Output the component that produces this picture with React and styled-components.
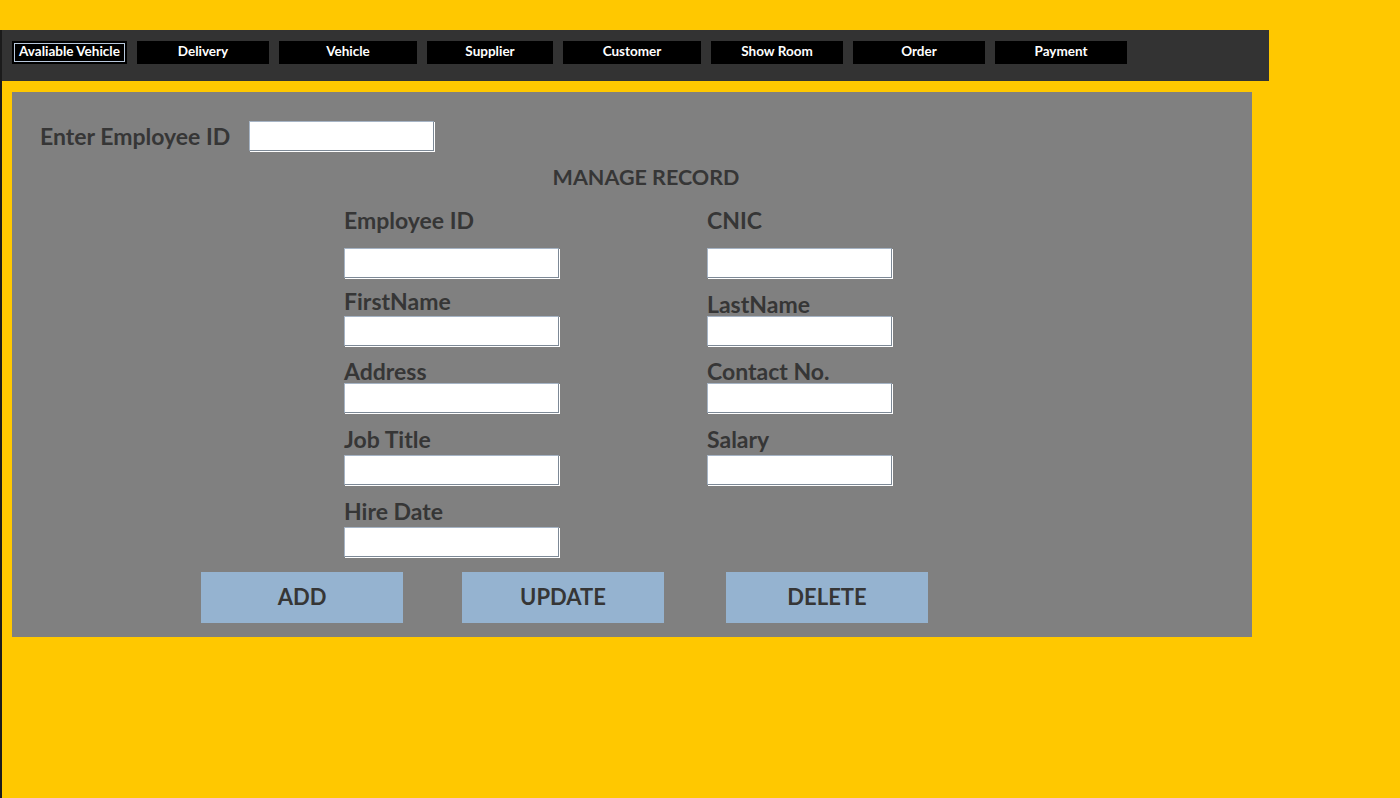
import React from 'react';
import styled, { createGlobalStyle } from 'styled-components';

const GlobalStyle = createGlobalStyle`
  html, body {
    margin: 0;
    padding: 0;
    height: 100%;
    background: #ffc800;
    font-family: Lato, "Open Sans", "Liberation Sans", sans-serif;
  }
  #root {
    min-height: 100%;
  }
`;

const Page = styled.div`
  min-height: 100vh;
  padding-top: 30px;
  box-sizing: border-box;
  background: #ffc800;
`;

const Frame = styled.div`
  min-height: calc(100vh - 30px);
  border-left: 2px solid #1b1b1b;
  box-sizing: border-box;
`;

const NavBar = styled.nav`
  display: flex;
  align-items: flex-start;
  gap: 10px;
  width: 1267px;
  height: 51px;
  box-sizing: border-box;
  padding: 11px 0 0 10px;
  background: #333333;
`;

const NavButton = styled.button`
  width: ${p => p.$w}px;
  height: 23px;
  padding: 0 0 3px;
  background: #000;
  color: #fff;
  font-family: Lato, "Open Sans", sans-serif;
  font-weight: 700;
  font-size: 13.5px;
  border: ${p => (p.$active ? '2px solid #000' : 'none')};
  outline: ${p => (p.$active ? '1px solid #b8c8dc' : 'none')};
  outline-offset: -3px;
  box-sizing: border-box;
  white-space: nowrap;
  cursor: pointer;
`;

const Panel = styled.section`
  width: 1240px;
  height: 545px;
  margin: 11px 0 0 10px;
  padding: 29px 0 0 28px;
  box-sizing: border-box;
  background: #808080;
`;

const SearchRow = styled.div`
  display: flex;
  align-items: flex-start;
  gap: 19px;

  ${'' /* label sits a bit above the box centre */}
  & > label {
    margin-top: 3px;
  }
`;

const Label = styled.label`
  display: block;
  font-size: 23px;
  line-height: 24px;
  font-weight: 700;
  color: #363636;
  white-space: nowrap;
`;

const TextBox = styled.input`
  display: block;
  width: ${p => p.$w - 1}px;
  height: 30px;
  margin: 0 0 1px;
  padding: 0 4px;
  box-sizing: border-box;
  background: #fff;
  border: 1px solid;
  border-color: #a6b4c5 #7d8996 #7d8996 #a6b4c5;
  box-shadow: 1px 1px 0 #fff;
  font-size: 15px;
`;

const Title = styled.h2`
  margin: 13px 0 0;
  font-size: 21.5px;
  line-height: 24px;
  font-weight: 700;
  text-align: center;
  color: #363636;
`;

const FormGrid = styled.div`
  display: grid;
  grid-template-columns: 363px 186px;
  margin-left: 304px;
`;

const Field = styled.div`
  display: flex;
  flex-direction: column;
  padding-top: ${p => p.$top}px;

  ${Label} {
    margin-bottom: ${p => p.$gap}px;
  }
`;

const ButtonRow = styled.div`
  display: flex;
  gap: 59px;
  margin: 14px 0 0 161px;
`;

const ActionButton = styled.button`
  width: 202px;
  height: 51px;
  margin-left: ${p => p.$ml || 0}px;
  padding: 0 0 3px;
  background: #95b3d0;
  border: none;
  color: #363636;
  font-family: Lato, "Open Sans", sans-serif;
  font-size: 22px;
  font-weight: 700;
  cursor: pointer;
`;

const navItems = [
  { label: 'Avaliable Vehicle', w: 115, active: true },
  { label: 'Delivery', w: 132 },
  { label: 'Vehicle', w: 138 },
  { label: 'Supplier', w: 126 },
  { label: 'Customer', w: 138 },
  { label: 'Show Room', w: 132 },
  { label: 'Order', w: 132 },
  { label: 'Payment', w: 132 },
];

// [label, top space, gap under label, input width]
const fields = [
  ['Employee ID', 19, 16, 216],
  ['CNIC', 19, 16, 186],
  ['FirstName', 10, 3, 216],
  ['LastName', 13, 0, 186],
  ['Address', 12, 0, 216],
  ['Contact No.', 12, 0, 186],
  ['Job Title', 13, 4, 216],
  ['Salary', 13, 4, 186],
  ['Hire Date', 13, 4, 216],
];

export default function App() {
  return (
    <>
      <GlobalStyle />
      <Page>
        <Frame>
          <NavBar>
            {navItems.map(item => (
              <NavButton key={item.label} $w={item.w} $active={item.active}>
                {item.label}
              </NavButton>
            ))}
          </NavBar>
          <Panel>
            <SearchRow>
              <Label>Enter Employee ID</Label>
              <TextBox $w={186} />
            </SearchRow>
            <Title>MANAGE RECORD</Title>
            <FormGrid>
              {fields.map(([label, top, gap, w]) => (
                <Field key={label} $top={top} $gap={gap}>
                  <Label>{label}</Label>
                  <TextBox $w={w} />
                </Field>
              ))}
            </FormGrid>
            <ButtonRow>
              <ActionButton>ADD</ActionButton>
              <ActionButton>UPDATE</ActionButton>
              <ActionButton $ml={3}>DELETE</ActionButton>
            </ButtonRow>
          </Panel>
        </Frame>
      </Page>
    </>
  );
}
